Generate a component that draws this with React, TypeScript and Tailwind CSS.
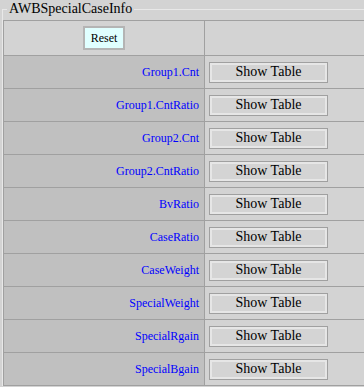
import React from "react";

const rows = [
  "Group1.Cnt",
  "Group1.CntRatio",
  "Group2.Cnt",
  "Group2.CntRatio",
  "BvRatio",
  "CaseRatio",
  "CaseWeight",
  "SpecialWeight",
  "SpecialRgain",
  "SpecialBgain",
];

export default function App() {
  return (
    <div className="w-[364px] h-[387px] overflow-hidden bg-[#d3d3d3] font-[family-name:'Liberation_Serif',serif] text-black">
      <fieldset className="ml-[2px] mt-[1px] w-[420px] border-l border-t border-[#e8e8e8] pt-[3px]">
        <legend className="ml-[4px] px-[2px] text-[14px] leading-[16px]">AWBSpecialCaseInfo</legend>
        <div className="w-[410px] border-t border-l border-b border-[#a0a0a0]">
          <div className="flex h-[35px] border-b border-[#a0a0a0]">
            <div className="w-[201px] border-r border-[#a0a0a0] flex items-center justify-center">
              <button className="w-[42px] h-[24px] border-2 border-[#b4b4b4] bg-[#e0ffff] text-[12px] leading-[14px] flex items-center justify-center">
                Reset
              </button>
            </div>
            <div className="flex-1"></div>
          </div>
          {rows.map((r, i) => (
            <div
              key={r}
              className={
                i < rows.length - 1
                  ? "flex h-[33px] border-b border-[#a0a0a0]"
                  : "flex h-[32px]"
              }
            >
              <div className="w-[201px] border-r border-[#a0a0a0] bg-[#c0c0c0] flex items-center justify-end pr-[5px] text-[12px] text-[#0000ff]">
                {r}
              </div>
              <div className="flex-1 flex items-center pl-[4px]">
                <button className="w-[119px] h-[21px] border border-[#a0a0a0] bg-[#d4d4d4] shadow-[inset_0_0_0_2px_#e6e6e6] text-[14px] leading-[16px] flex items-center justify-center">
                  Show Table
                </button>
              </div>
            </div>
          ))}
        </div>
      </fieldset>
    </div>
  );
}
